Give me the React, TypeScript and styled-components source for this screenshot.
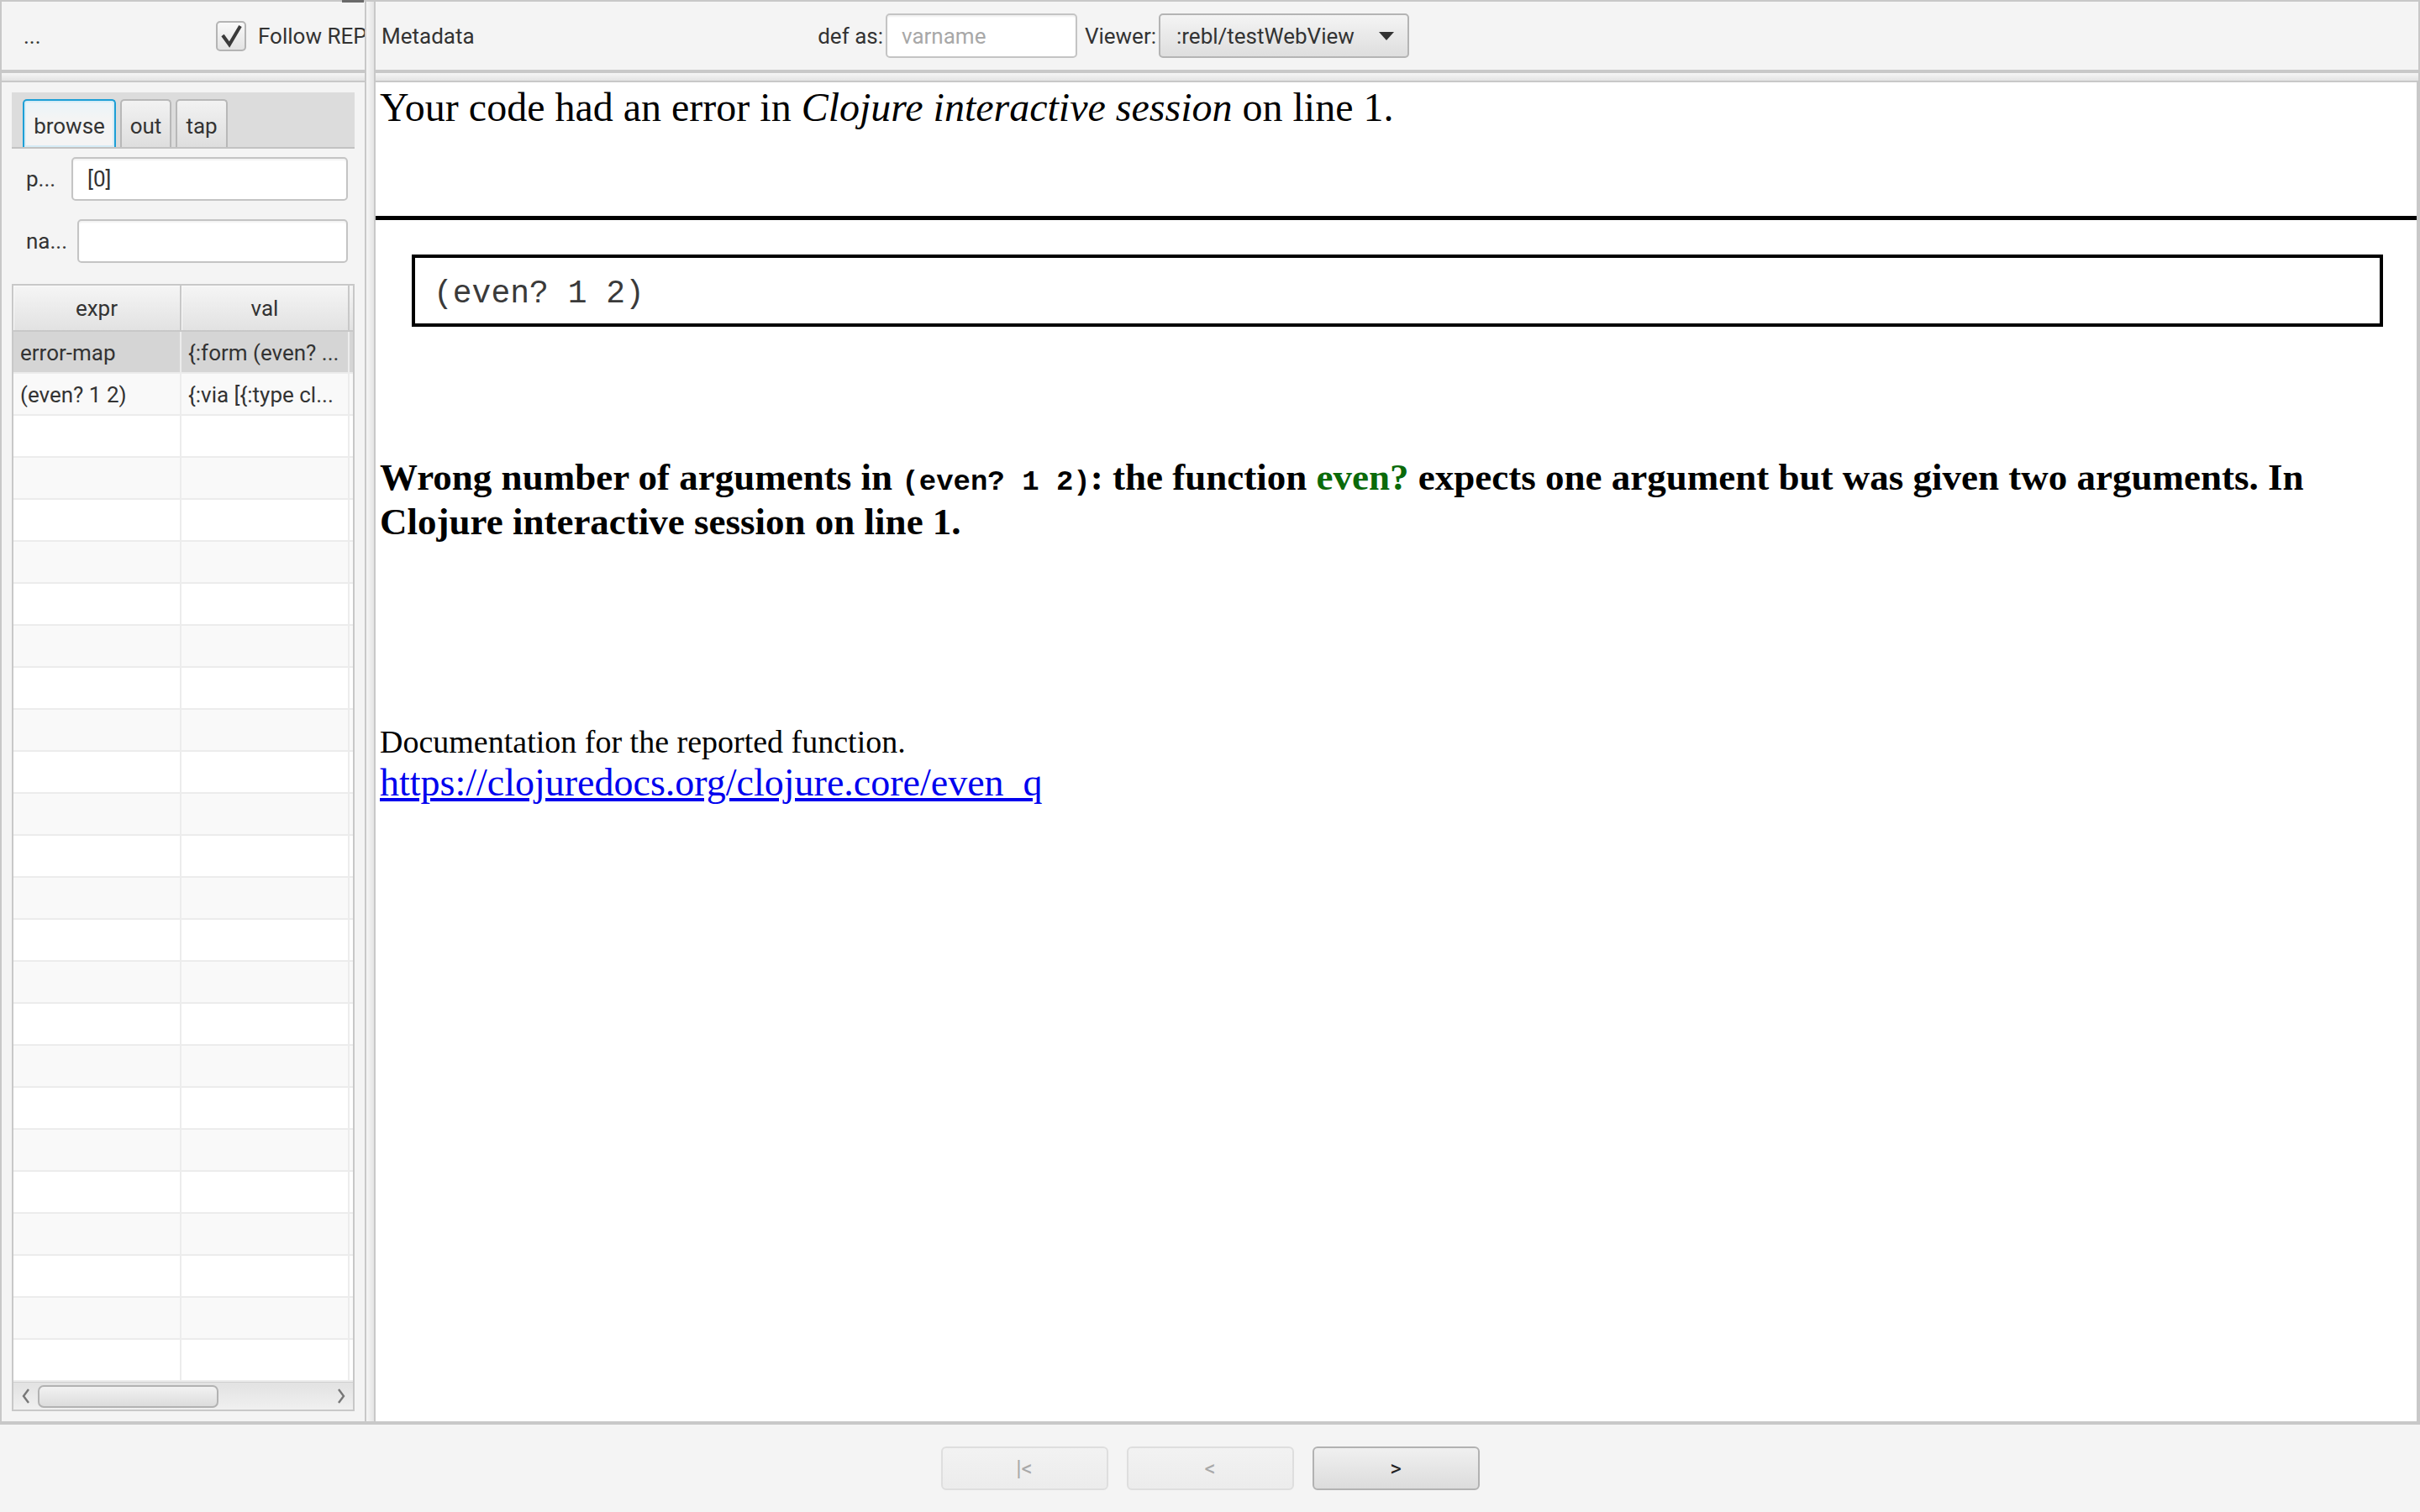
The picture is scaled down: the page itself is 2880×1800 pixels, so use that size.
import React from "react";
import styled, { createGlobalStyle } from "styled-components";

const Global = createGlobalStyle`
  html, body { margin: 0; padding: 0; }
  body {
    background: #f4f4f4;
    font-family: Roboto, "Liberation Sans", sans-serif;
    font-size: 26px;
    color: #333;
    overflow: hidden;
  }
  * { box-sizing: border-box; }
`;

const Root = styled.div`
  width: 2880px;
  height: 1800px;
  display: flex;
  flex-direction: column;
  background: #f4f4f4;
`;

const Split = styled.div`
  height: 1696px;
  flex: 0 0 1696px;
  display: flex;
  border: 2px solid #c8c8c8;
  border-bottom-width: 4px;
`;

const LeftPane = styled.div`
  width: 432px;
  flex: 0 0 432px;
  display: flex;
  flex-direction: column;
  position: relative;
  min-width: 0;
`;

const RightPane = styled.div`
  flex: 1;
  display: flex;
  flex-direction: column;
  min-width: 0;
`;

const TopMark = styled.div`
  position: absolute;
  top: -2px;
  right: 1px;
  width: 26px;
  height: 3px;
  background: #6a6a6a;
`;

const TopBar = styled.div<{ $pad: number }>`
  height: 81px;
  flex: 0 0 81px;
  display: flex;
  align-items: center;
  padding-left: ${(p) => p.$pad}px;
  background: #f4f4f4;
  overflow: hidden;
  white-space: nowrap;
`;

const HDivider = styled.div`
  height: 15px;
  flex: 0 0 15px;
  border-top: 4px solid #c8c8c8;
  border-bottom: 2px solid #c8c8c8;
  background: linear-gradient(#f6f6f6, #e3e3e3);
`;

const VDivider = styled.div`
  width: 13px;
  flex: 0 0 13px;
  border-left: 2px solid #c8c8c8;
  border-right: 2px solid #c8c8c8;
  background: linear-gradient(90deg, #f6f6f6, #e4e4e4);
`;

const Dots = styled.span`
  width: 229px;
  flex: 0 0 229px;
`;

const CheckBox = styled.span`
  width: 36px;
  height: 36px;
  flex: 0 0 36px;
  border: 2px solid #b4b4b4;
  border-radius: 5px;
  background: linear-gradient(#f9f9f9, #e3e3e3);
  display: inline-flex;
  align-items: center;
  justify-content: center;
`;

const CheckText = styled.span`
  margin-left: 14px;
`;

const MetaLabel = styled.span`
  width: 518px;
  flex: 0 0 518px;
`;

const FieldLabel = styled.span<{ $w: number; $ml?: number }>`
  width: ${(p) => p.$w}px;
  flex: 0 0 ${(p) => p.$w}px;
  margin-left: ${(p) => p.$ml ?? 0}px;
  text-align: right;
`;

const VarInput = styled.div`
  width: 228px;
  height: 53px;
  margin-left: 3px;
  border: 2px solid #c4c4c4;
  border-radius: 5px;
  background: #fff;
  box-shadow: inset 0 2px 2px rgba(0, 0, 0, 0.06);
  display: flex;
  align-items: center;
  padding-left: 17px;
  color: #a8a8a8;
`;

const Combo = styled.div`
  width: 298px;
  height: 53px;
  margin-left: 3px;
  border: 2px solid #b4b4b4;
  border-radius: 5px;
  background: linear-gradient(#f4f4f4, #dedede);
  display: flex;
  align-items: center;
  padding-left: 19px;
  padding-right: 16px;
  justify-content: space-between;
`;

const LeftBody = styled.div`
  flex: 1;
  display: flex;
  flex-direction: column;
  padding: 12px;
  min-height: 0;
`;

const TabHeader = styled.div`
  height: 67px;
  flex: 0 0 67px;
  background: #dcdcdc;
  border-bottom: 2px solid #c2c2c2;
  display: flex;
  align-items: flex-end;
  gap: 5px;
  padding-left: 13px;
  margin-bottom: -2px;
`;

const Tab = styled.div<{ $active?: boolean; $w: number }>`
  width: ${(p) => p.$w}px;
  height: 57px;
  padding-top: 4px;
  display: flex;
  align-items: center;
  justify-content: center;
  border: 2px solid ${(p) => (p.$active ? "#1d9fd6" : "#b8b8b8")};
  border-bottom: none;
  border-radius: 5px 5px 0 0;
  background: ${(p) =>
    p.$active
      ? "linear-gradient(#eaf4f9, #f4f4f4 40%)"
      : "linear-gradient(#f2f2f2, #dedede)"};
  box-shadow: ${(p) => (p.$active ? "inset 0 0 0 2px #d6ecf6" : "none")};
  position: relative;
  z-index: ${(p) => (p.$active ? 1 : 0)};
`;

const FormRow = styled.div<{ $mt: number }>`
  display: flex;
  align-items: center;
  height: 52px;
  margin-top: ${(p) => p.$mt}px;
  padding-left: 17px;
  padding-right: 8px;
`;

const RowLabel = styled.span<{ $w: number }>`
  width: ${(p) => p.$w}px;
  flex: 0 0 ${(p) => p.$w}px;
`;

const TextField = styled.div`
  flex: 1;
  height: 52px;
  border: 2px solid #c4c4c4;
  border-radius: 5px;
  background: #fff;
  box-shadow: inset 0 2px 2px rgba(0, 0, 0, 0.05);
  display: flex;
  align-items: center;
  padding-left: 17px;
`;

const Table = styled.div`
  flex: 1;
  margin-top: 25px;
  border: 2px solid #c8c8c8;
  background: #fff;
  display: flex;
  flex-direction: column;
  overflow: hidden;
  min-height: 0;
`;

const HeaderRow = styled.div`
  display: flex;
  height: 55px;
  flex: 0 0 55px;
  border-bottom: 2px solid #c8c8c8;
  background: linear-gradient(#f5f5f5, #e2e2e2);
`;

const HeaderCell = styled.div<{ $w: number }>`
  width: ${(p) => p.$w}px;
  flex: 0 0 ${(p) => p.$w}px;
  border-right: 2px solid #c8c8c8;
  display: flex;
  align-items: center;
  justify-content: center;
  box-shadow: inset 1px 1px 0 #fafafa;
`;

const BodyRow = styled.div<{ $bg: string }>`
  display: flex;
  height: 50px;
  flex: 0 0 50px;
  background: ${(p) => p.$bg};
  border-bottom: 2px solid #ececec;
`;

const Cell = styled.div<{ $w: number }>`
  width: ${(p) => p.$w}px;
  flex: 0 0 ${(p) => p.$w}px;
  border-right: 2px solid #ececec;
  padding-left: 8px;
  padding-top: 2px;
  display: flex;
  align-items: center;
  white-space: nowrap;
  overflow: hidden;
  color: #333;
`;

const HScroll = styled.div`
  height: 33px;
  flex: 0 0 33px;
  display: flex;
  align-items: center;
  background: linear-gradient(#e2e2e2, #f0f0f0);
  border-top: 1px solid #d0d0d0;
`;

const ScrollArrow = styled.div`
  width: 29px;
  flex: 0 0 29px;
  height: 33px;
  display: flex;
  align-items: center;
  justify-content: center;
`;

const Thumb = styled.div`
  width: 215px;
  height: 27px;
  border: 2px solid #b2b2b2;
  border-radius: 7px;
  background: linear-gradient(#f2f2f2, #dcdcdc);
`;

const Grow = styled.div`
  flex: 1;
`;

const Web = styled.div`
  flex: 1;
  background: #fff;
  border-right: 2px solid #c8c8c8;
  padding: 0 5px;
  font-family: "Liberation Serif", "Times New Roman", serif;
  color: #000;
  overflow: hidden;
`;

const Intro = styled.p`
  margin: 3px 0 0;
  font-size: 48px;
  line-height: 54px;
  white-space: nowrap;
`;

const Rule = styled.div`
  height: 5px;
  background: #000;
  margin: 102px -5px 0;
`;

const CodeBox = styled.pre`
  margin: 41px 35px 0 38px;
  border: 4px solid #000;
  height: 86px;
  padding: 8px 0 0 22px;
  font-family: "Liberation Mono", "Courier New", monospace;
  font-size: 38px;
  line-height: 70px;
  color: #3a3a3a;
`;

const Message = styled.p`
  margin: 153px 0 0;
  font-size: 45px;
  font-weight: bold;
  line-height: 53px;
`;

const InlineCode = styled.code`
  font-family: "Liberation Mono", "Courier New", monospace;
  font-size: 34px;
  font-weight: bold;
  line-height: 1;
`;

const FnName = styled.span`
  color: #0a6a0a;
`;

const Doc = styled.p`
  margin: 213px 0 0;
  font-size: 38px;
  line-height: 44px;
`;

const DocLink = styled.a`
  display: block;
  font-size: 46px;
  line-height: 53px;
  color: #0000ee;
  text-decoration: underline;
`;

const Footer = styled.div`
  flex: 1;
  display: flex;
  justify-content: center;
  align-items: center;
  gap: 22px;
`;

const NavButton = styled.div<{ $disabled?: boolean }>`
  width: 199px;
  height: 52px;
  border-radius: 6px;
  border: 2px solid ${(p) => (p.$disabled ? "#dedede" : "#b2b2b2")};
  background: ${(p) =>
    p.$disabled
      ? "linear-gradient(#f2f2f2, #ececec)"
      : "linear-gradient(#f0f0f0, #dcdcdc)"};
  color: ${(p) => (p.$disabled ? "#a9a9a9" : "#222")};
  display: flex;
  align-items: center;
  justify-content: center;
  font-size: 26px;
`;

const rows: { expr: string; val: string }[] = [
  { expr: "error-map", val: "{:form (even? ..." },
  { expr: "(even? 1 2)", val: "{:via [{:type cl..." },
  ...Array.from({ length: 23 }, () => ({ expr: "", val: "" })),
];

const Chevron = ({ dir }: { dir: "l" | "r" }) => (
  <svg width="12" height="20" viewBox="0 0 12 20">
    <path
      d={dir === "l" ? "M9 2 L3 10 L9 18" : "M3 2 L9 10 L3 18"}
      fill="none"
      stroke="#777"
      strokeWidth="2.4"
    />
  </svg>
);

export default function App() {
  return (
    <Root>
      <Global />
      <Split>
        <LeftPane>
          <TopMark />
          <TopBar $pad={26}>
            <Dots>...</Dots>
            <CheckBox>
              <svg width="30" height="30" viewBox="0 0 30 30">
                <path
                  d="M5 14 L13 25 L26 3"
                  fill="none"
                  stroke="#3a3a3a"
                  strokeWidth="4"
                  strokeLinejoin="miter"
                />
              </svg>
            </CheckBox>
            <CheckText>Follow REP</CheckText>
          </TopBar>
          <HDivider />
          <LeftBody>
            <TabHeader>
              <Tab $active $w={111}>
                browse
              </Tab>
              <Tab $w={61}>out</Tab>
              <Tab $w={62}>tap</Tab>
            </TabHeader>
            <FormRow $mt={12}>
              <RowLabel $w={54}>p...</RowLabel>
              <TextField>[0]</TextField>
            </FormRow>
            <FormRow $mt={22}>
              <RowLabel $w={61}>na...</RowLabel>
              <TextField />
            </FormRow>
            <Table>
              <HeaderRow>
                <HeaderCell $w={200}>expr</HeaderCell>
                <HeaderCell $w={200}>val</HeaderCell>
              </HeaderRow>
              {rows.map((r, i) => (
                <BodyRow
                  key={i}
                  $bg={i === 0 ? "#d5d5d5" : i % 2 === 1 ? "#f9f9f9" : "#ffffff"}
                >
                  <Cell $w={200}>{r.expr}</Cell>
                  <Cell $w={200}>{r.val}</Cell>
                </BodyRow>
              ))}
              <Grow />
              <HScroll>
                <ScrollArrow>
                  <Chevron dir="l" />
                </ScrollArrow>
                <Thumb />
                <Grow />
                <ScrollArrow>
                  <Chevron dir="r" />
                </ScrollArrow>
              </HScroll>
            </Table>
          </LeftBody>
        </LeftPane>
        <VDivider />
        <RightPane>
          <TopBar $pad={7}>
            <MetaLabel>Metadata</MetaLabel>
            <FieldLabel $w={79}>def as:</FieldLabel>
            <VarInput>varname</VarInput>
            <FieldLabel $w={87} $ml={7}>
              Viewer:
            </FieldLabel>
            <Combo>
              <span>:rebl/testWebView</span>
              <svg width="18" height="10" viewBox="0 0 18 10">
                <path d="M0 0 L18 0 L9 10 Z" fill="#333" />
              </svg>
            </Combo>
          </TopBar>
          <HDivider />
          <Web>
            <Intro>
              Your code had an error in <i>Clojure interactive session</i> on line 1.
            </Intro>
            <Rule />
            <CodeBox>(even? 1 2)</CodeBox>
            <Message>
              Wrong number of arguments in <InlineCode>(even? 1 2)</InlineCode>: the
              function <FnName>even?</FnName> expects one argument but was given two
              arguments. In Clojure interactive session on line 1.
            </Message>
            <Doc>
              Documentation for the reported function.
              <DocLink href="#">https://clojuredocs.org/clojure.core/even_q</DocLink>
            </Doc>
          </Web>
        </RightPane>
      </Split>
      <Footer>
        <NavButton $disabled>|&lt;</NavButton>
        <NavButton $disabled>&lt;</NavButton>
        <NavButton>&gt;</NavButton>
      </Footer>
    </Root>
  );
}
